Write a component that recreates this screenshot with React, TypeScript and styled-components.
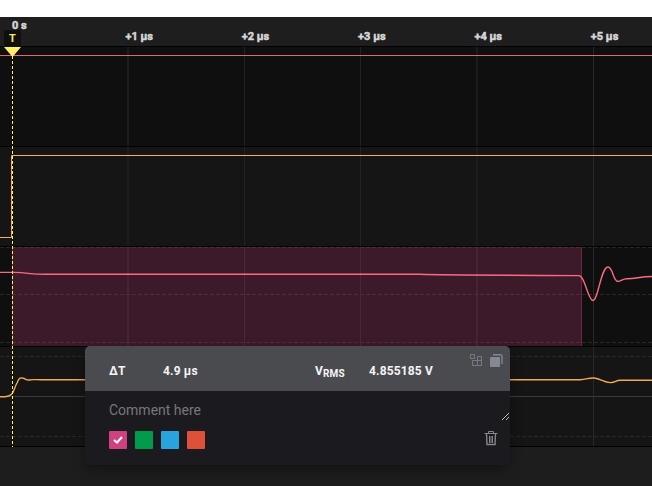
import React from "react";
import styled, { createGlobalStyle } from "styled-components";

const GlobalStyle = createGlobalStyle`
  * { box-sizing: border-box; }
  body { margin: 0; background: #fff; font-family: Roboto, "Liberation Sans", sans-serif; }
`;

const Page = styled.main`
  width: 652px;
  height: 486px;
  padding-top: 17px;
  overflow: hidden;
`;

const Scope = styled.section`
  position: relative;
  height: 469px;
  display: flex;
  flex-direction: column;
  background: #1d1d1d;
`;

const Ruler = styled.header`
  height: 30px;
  border-bottom: 1px solid #000;
  background: #1e1e1e;
  color: #d6d6d6;
  font-size: 11px;
  font-weight: 700;
  line-height: 13px;
  -webkit-text-stroke: 0.5px #d6d6d6;
`;

const Origin = styled.div`
  height: 13px;
  padding: 2px 0 0 12px;
`;

const Ticks = styled.div`
  display: grid;
  grid-template-columns: repeat(5, 116.35px);
  padding-left: 81px;
`;

const Tick = styled.span`
  text-align: center;
`;

const Channel = styled.div<{ $alt?: boolean }>`
  height: 100px;
  border-bottom: 1px solid #000;
  background: ${(p) => (p.$alt ? "#151515" : "#0f0f0f")};
`;

const Plot = styled.svg`
  display: block;
  width: 652px;
  height: 99px;
`;

const TriggerMark = styled.div`
  position: absolute;
  left: 4px;
  top: 13px;
  width: 17px;
  display: flex;
  flex-direction: column;
  align-items: center;
`;

const TriggerTag = styled.div`
  width: 17px;
  height: 17px;
  border-radius: 2px 2px 0 0;
  background: #0f0f0f;
  color: #f5e663;
  font-size: 11px;
  font-weight: 700;
  line-height: 18px;
  text-align: center;
`;

const TriggerLine = styled.svg`
  display: block;
  width: 17px;
  height: 400px;
`;

const Popup = styled.aside`
  position: absolute;
  left: 85px;
  top: 329px;
  width: 425px;
  height: 119px;
  border-radius: 5px;
  overflow: hidden;
  background: #1b1a1f;
`;

const PopupShadow = styled.div`
  position: absolute;
  left: 85px;
  top: 329px;
  width: 425px;
  height: 119px;
  border-radius: 5px;
  box-shadow: 0 4px 12px rgba(0, 0, 0, 0.35);
`;

const Measures = styled.div`
  display: grid;
  grid-template-columns: 54px 152px 54px 1fr auto;
  height: 45px;
  padding: 0 7px 0 24px;
  background: #4a4b4f;
  color: #f4f4f5;
  font-size: 12px;
  font-weight: 700;
  line-height: 51px;
  letter-spacing: 0.15px;
  white-space: nowrap;
`;

const Subscript = styled.sub`
  font-size: 10px;
  line-height: 0;
  vertical-align: -2px;
`;

const Tools = styled.div`
  display: flex;
  gap: 7px;
  padding-top: 8px;

  svg { display: block; }
`;

const Comment = styled.div`
  display: flex;
  justify-content: space-between;
  align-items: flex-end;
  height: 30px;
  padding-left: 24px;
  color: #77777a;
  font-size: 14px;
  line-height: 22px;
`;

const CommentText = styled.span`
  align-self: flex-start;
  padding-top: 8px;
`;

const Actions = styled.div`
  display: flex;
  justify-content: space-between;
  padding: 10px 12px 0 24px;
`;

const Swatches = styled.div`
  display: flex;
  gap: 8px;
`;

const Swatch = styled.span<{ $color: string }>`
  display: grid;
  place-items: center;
  width: 18px;
  height: 18px;
  border-radius: 1px;
  background: ${(p) => p.$color};
`;

function Grid() {
  return (
    <g fill="#222222" shapeRendering="crispEdges">
      <rect x="127" width="2" height="99" fill="#1c1c1c" />
      <rect x="244" width="1" height="99" />
      <rect x="360" width="1" height="99" />
      <rect x="476" width="2" height="99" fill="#1c1c1c" />
      <rect x="593" width="1" height="99" fill="#282828" />
    </g>
  );
}

function Dashes({ at }: { at: number[] }) {
  return (
    <g stroke="#272727" strokeDasharray="4 2" shapeRendering="crispEdges">
      {at.map((y) => (
        <line key={y} x1="0" x2="652" y1={y + 0.5} y2={y + 0.5} />
      ))}
    </g>
  );
}

export default function App() {
  return (
    <Page>
      <GlobalStyle />
      <Scope>
        <Ruler>
          <Origin>0 s</Origin>
          <Ticks>
            {["+1 µs", "+2 µs", "+3 µs", "+4 µs", "+5 µs"].map((t) => (
              <Tick key={t}>{t}</Tick>
            ))}
          </Ticks>
        </Ruler>
        <Channel>
          <Plot viewBox="0 0 652 99">
            <Grid />
            <path d="M0 8.5H652" stroke="#e2686e" />
          </Plot>
        </Channel>
        <Channel $alt>
          <Plot viewBox="0 0 652 99">
            <Grid />
            <path d="M0 90.5H11.5V8.5H652" fill="none" stroke="#f5ae62" />
          </Plot>
        </Channel>
        <Channel>
          <Plot viewBox="0 0 652 99">
            <Grid />
            <Dashes at={[0, 47, 95]} />
            <rect x="12" width="570" height="99" fill="#d13f7f" fillOpacity="0.24" />
            <path d="M12.5 0V99M581.5 0V99" stroke="#d13f7f" strokeOpacity="0.35" />
            <path
              d="M0 25.4H15C28 25.8 30 27.2 45 27.3H420C450 28.3 520 28 579 28.6C585 29 588 53.5 593 53.5C598 53.5 601 20 608 20C613 20 613 34.5 618 34.5C621 34.5 623 31.5 627 31.7C636 31.8 640 29.5 652 29.5"
              fill="none"
              stroke="#fb6b80"
              strokeWidth="1.4"
            />
          </Plot>
        </Channel>
        <Channel $alt>
          <Plot viewBox="0 0 652 99">
            <Grid />
            <Dashes at={[9, 89]} />
            <path d="M0 49.5H652" stroke="#3a3a3a" />
            <path
              d="M0 49.8H5C14 49.5 13 43 17 36C19 31 20 30.5 22 31C25 31 26 33.5 29 33C33 32 36 33 42 32.8H580C587 32.3 589 30.6 594 31C601 31.5 604 36 611 35.6C616 35 616 33 621 33.3H652"
              fill="none"
              stroke="#f7a853"
              strokeWidth="1.4"
            />
          </Plot>
        </Channel>

        <TriggerMark>
          <TriggerTag>T</TriggerTag>
          <TriggerLine viewBox="0 0 17 400">
            <path d="M8.5 9V400" stroke="#fdf06a" strokeDasharray="3 2" />
            <path d="M0 0H17L8.5 10Z" fill="#fff06a" />
          </TriggerLine>
        </TriggerMark>

        <PopupShadow />
        <Popup>
          <Measures>
            <span>ΔT</span>
            <span>4.9 µs</span>
            <span>V<Subscript>RMS</Subscript></span>
            <span>4.855185 V</span>
            <Tools>
              <svg width="13" height="13" fill="none" stroke="#777984">
                <path d="M.5 .5h4v4h-4zM7.5 2.5h4v9h-9v-5h9M7.5 2.5v9" />
              </svg>
              <svg width="13" height="13">
                <path d="M3 .8h7.5a1.5 1.5 0 0 1 1.5 1.5V10" fill="none" stroke="#83858f" strokeWidth="1.4" />
                <rect y="3" width="10" height="10" rx="1" fill="#868893" />
              </svg>
            </Tools>
          </Measures>
          <Comment>
            <CommentText>Comment here</CommentText>
            <svg width="9" height="9" stroke="#bcbcbc" fill="none">
              <path d="M1 8L8 1M5 8L8 5" />
            </svg>
          </Comment>
          <Actions>
            <Swatches>
              <Swatch $color="#cf427f">
                <svg width="10" height="8" fill="none" stroke="#fff" strokeWidth="2">
                  <path d="M1 4L4 6.5L9 1" />
                </svg>
              </Swatch>
              <Swatch $color="#009b4d" />
              <Swatch $color="#28a4dd" />
              <Swatch $color="#df503b" />
            </Swatches>
            <svg width="14" height="15" fill="none" stroke="#85858e">
              <path d="M.5 2.5h13M4.5 2.5v-2h5v2" />
              <path d="M2.5 3l.5 10.5h8l.5-10.5" strokeWidth="1.4" />
              <path d="M5.5 5v7M7 5v7M8.5 5v7" />
            </svg>
          </Actions>
        </Popup>
      </Scope>
    </Page>
  );
}
